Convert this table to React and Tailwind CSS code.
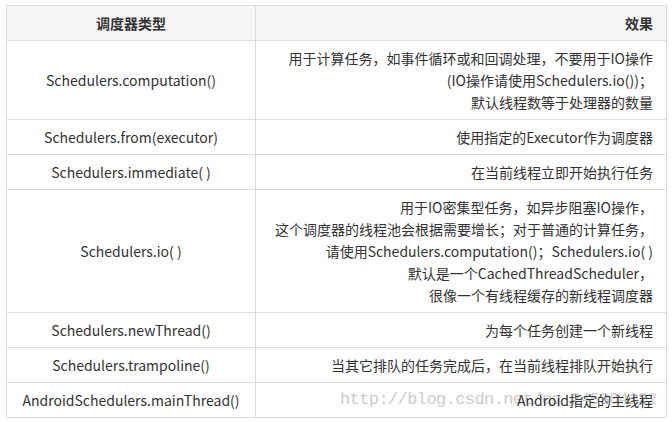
import React from "react";

const rows = [
  ["Schedulers.computation()", ["用于计算任务，如事件循环或和回调处理，不要用于IO操作", "(IO操作请使用Schedulers.io())；", "默认线程数等于处理器的数量"]],
  ["Schedulers.from(executor)", ["使用指定的Executor作为调度器"]],
  ["Schedulers.immediate( )", ["在当前线程立即开始执行任务"]],
  ["Schedulers.io( )", ["用于IO密集型任务，如异步阻塞IO操作，", "这个调度器的线程池会根据需要增长；对于普通的计算任务，", "请使用Schedulers.computation()；Schedulers.io( )", "默认是一个CachedThreadScheduler，", "很像一个有线程缓存的新线程调度器"]],
  ["Schedulers.newThread()", ["为每个任务创建一个新线程"]],
  ["Schedulers.trampoline()", ["当其它排队的任务完成后，在当前线程排队开始执行"]],
  ["AndroidSchedulers.mainThread()", ["Android指定的主线程"]],
];

export default function App() {
  return (
    <div className="relative w-[672px] h-[422px] bg-white pt-[5px] pl-[6px] text-[#333] text-[14px] leading-[22px]" style={{ fontFamily: '"Noto Sans CJK SC", "Open Sans", sans-serif' }}>
      <div className="absolute z-0 left-[340px] top-[389px] text-[17px] leading-[22px] tracking-[-0.6px] text-[#cccccc] whitespace-nowrap pointer-events-none" style={{ fontFamily: '"Liberation Mono", monospace' }}>
        http://blog.csdn.net/qq_245304122
      </div>
      <table className="relative z-10 border-collapse border border-[#dddddd] w-[660px] table-fixed">
        <colgroup>
          <col className="w-[249px]" />
          <col className="w-[411px]" />
        </colgroup>
        <thead>
          <tr className="bg-[#f5f5f5]">
            <th className="border border-[#dddddd] py-[6px] text-center font-bold">调度器类型</th>
            <th className="border border-[#dddddd] py-[6px] pr-[13px] text-right font-bold">效果</th>
          </tr>
        </thead>
        <tbody>
          {rows.map(([name, lines], i) => (
            <tr key={i}>
              <td className="border border-[#dddddd] py-[6px] text-center align-middle">{name}</td>
              <td className="border border-[#dddddd] py-[6px] pr-[13px] text-right align-middle">
                {lines.map((l, j) => (
                  <div key={j}>{l}</div>
                ))}
              </td>
            </tr>
          ))}
        </tbody>
      </table>
    </div>
  );
}
